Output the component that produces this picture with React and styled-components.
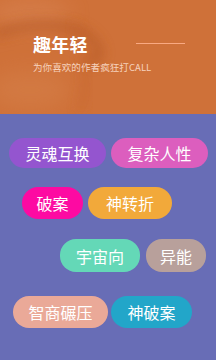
import React from 'react';
import styled, { createGlobalStyle } from 'styled-components';

const GlobalStyle = createGlobalStyle`
  html, body {
    margin: 0;
    padding: 0;
    background: #686db6;
  }
  body {
    font-family: "Noto Sans CJK SC", "Noto Sans", sans-serif;
  }
`;

const Page = styled.div`
  width: 216px;
  height: 360px;
  overflow: hidden;
  background: #686db6;
`;

const Header = styled.header`
  position: relative;
  height: 114px;
  background: #cf7139;
  overflow: hidden;
  padding: 31px 0 0 33px;
  box-sizing: border-box;
`;

const Backdrop = styled.svg`
  position: absolute;
  left: 0;
  top: 0;
  width: 216px;
  height: 114px;
`;

const HeaderContent = styled.div`
  position: relative;
`;

const TitleRow = styled.div`
  display: flex;
  align-items: center;
  height: 25px;
`;

const Title = styled.h1`
  margin: 0;
  font-size: 18px;
  font-weight: 700;
  color: #fff;
  letter-spacing: 0.2px;
`;

const Rule = styled.span`
  display: block;
  width: 49px;
  height: 1px;
  margin-left: 48px;
  background: #f9a982;
`;

const Subtitle = styled.p`
  margin: 4px 0 0;
  font-size: 9.6px;
  color: #f6d2bd;
  white-space: nowrap;
`;

const Cloud = styled.section`
  display: flex;
  flex-direction: column;
  padding-top: 24px;
`;

const Row = styled.div`
  display: flex;
  gap: ${({ $gap }) => $gap}px;
  padding-left: ${({ $indent }) => $indent}px;
  margin-bottom: ${({ $after }) => $after}px;
`;

const Tag = styled.span`
  display: inline-flex;
  align-items: center;
  justify-content: center;
  height: ${({ $h }) => $h}px;
  width: ${({ $w }) => $w}px;
  border-radius: 16px;
  background: ${({ $bg }) => $bg};
  color: #fff;
  font-size: 16px;
  line-height: 1;
`;

const rows = [
  { indent: 9, gap: 5, h: 30, after: 19, tags: [
    { text: '灵魂互换', bg: '#9455cf', w: 97 },
    { text: '复杂人性', bg: '#dc5ebe', w: 97 },
  ] },
  { indent: 22, gap: 5, h: 32, after: 20, tags: [
    { text: '破案', bg: '#fd0aa2', w: 61 },
    { text: '神转折', bg: '#f2a93a', w: 84 },
  ] },
  { indent: 60, gap: 6, h: 33, after: 24, tags: [
    { text: '宇宙向', bg: '#64d8b7', w: 80 },
    { text: '异能', bg: '#b8a09b', w: 60 },
  ] },
  { indent: 13, gap: 3, h: 32, after: 0, tags: [
    { text: '智商碾压', bg: '#eaa998', w: 95 },
    { text: '神破案', bg: '#22a6c9', w: 81 },
  ] },
];

export default function App() {
  return (
    <Page>
      <GlobalStyle />
      <Header>
        <Backdrop viewBox="0 0 216 114">
          <defs>
            <filter id="soft" x="-50%" y="-50%" width="200%" height="200%">
              <feGaussianBlur stdDeviation="6" />
            </filter>
            <filter id="softer" x="-50%" y="-50%" width="200%" height="200%">
              <feGaussianBlur stdDeviation="10" />
            </filter>
          </defs>
          <ellipse cx="30" cy="14" rx="40" ry="16" fill="#d88251" filter="url(#softer)" opacity="0.6" />
          <path d="M-5 34 C 30 22, 80 20, 96 44 C 104 58, 94 64, 86 58" stroke="#b65a27" strokeWidth="9" fill="none" filter="url(#soft)" opacity="0.7" />
          <path d="M72 24 C 84 40, 92 70, 80 110" stroke="#c4632e" strokeWidth="5" fill="none" filter="url(#soft)" opacity="0.6" />
          <ellipse cx="30" cy="90" rx="40" ry="20" fill="#d6814b" filter="url(#softer)" opacity="0.5" />
        </Backdrop>
        <HeaderContent>
          <TitleRow>
            <Title>趣年轻</Title>
            <Rule />
          </TitleRow>
          <Subtitle>为你喜欢的作者疯狂打CALL</Subtitle>
        </HeaderContent>
      </Header>
      <Cloud>
        {rows.map((row, i) => (
          <Row key={i} $indent={row.indent} $gap={row.gap} $after={row.after}>
            {row.tags.map((t) => (
              <Tag key={t.text} $bg={t.bg} $w={t.w} $h={row.h}>{t.text}</Tag>
            ))}
          </Row>
        ))}
      </Cloud>
    </Page>
  );
}
